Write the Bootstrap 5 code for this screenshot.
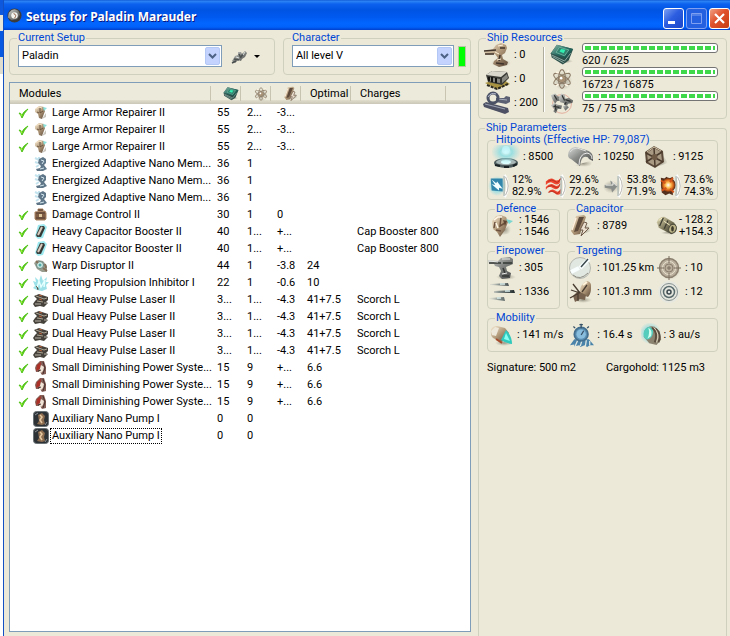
<!DOCTYPE html>
<html lang="en">
<head>
<meta charset="utf-8">
<meta name="viewport" content="width=device-width, initial-scale=1">
<title>Setups for Paladin Marauder</title>
<link rel="stylesheet" href="https://cdn.jsdelivr.net/npm/bootstrap@5.3.0/dist/css/bootstrap.min.css">
<style>
:root{--face:#ece9d8;--line:#d0d0bf;--field:#7f9db9;--caption:#0046d5}
body{font-family:Roboto,"Liberation Sans",sans-serif;font-size:11px;line-height:12px;color:#000;background:#fff}
.desktop-edge{flex:0 0 3px;background:linear-gradient(#0d58dc 0 15px,#e7e5da 15px 31px,#0759e2 31px 57px,#dedcce 57px 74px,#fff 74px)}
.win{border-left:1px solid #1250c4;background:var(--face);min-width:0}
.titlebar{height:30px;background:linear-gradient(#0a4fd0 0,#2f86f5 1px,#0c62ee 4px,#0054e3 10px,#0059f0 17px,#0266ff 23px,#0162fb 27px,#003fcb 30px);padding:4px 0 0 3px}
.titlebar h1{font:bold 12px/18px "Noto Sans","Open Sans",sans-serif;color:#fff;text-shadow:1px 1px #0a1883}
.winbtns{gap:2px}
.winbtn{width:21px;height:21px;border:1px solid #fff;border-radius:3px;background:linear-gradient(135deg,#7da2f2,#2c5de0 45%,#1c48c8);color:#fff}
.winbtn-max{border-color:#7f9ff0;background:#2560e0}
.winbtn-close{background:linear-gradient(135deg,#f0a085,#e0512b 45%,#c63c12)}
fieldset.box{border:1px solid var(--line);border-radius:4px;min-width:0}
.box>legend{float:none;width:auto;margin:0 0 0 7px;padding:0 1px;font-size:11px;line-height:10px;color:var(--caption)}
.pane-left{min-width:0;padding:3px 7px 4px 5px}
.pane-right{flex:0 0 252px;padding-top:3px;padding-right:3px}
.chooser{padding:0 4px 7px 8px}
.chooser>legend{margin-left:-1px}
.chooser>div{padding-top:2px}
.chooser-pilot{flex:0 1 188px}
.pick{height:22px;border:1px solid var(--field);border-radius:0;padding:0 20px 0 3px;font-size:11px;line-height:20px;color:#000;background:#fff url("data:image/svg+xml,%3Csvg xmlns='http://www.w3.org/2000/svg' width='15' height='18'%3E%3Crect x='.5' y='.5' width='14' height='17' rx='1.5' fill='%23c3d3fd' stroke='%23b4c8f6'/%3E%3Cpath d='M4 7l3.500 3.500L11 7' fill='none' stroke='%234d6185' stroke-width='2'/%3E%3C/svg%3E") no-repeat right 1px center/15px 18px}
.pick-setup{flex:0 1 204px}
.drop-arrow{border:3px solid transparent;border-top-color:#000;border-bottom:0}
.skill-light{width:8px;height:21px;background:#0f0;border:1px solid #b9c7a4}
.list-frame{border:1px solid var(--field);background:#fff;margin-top:7px}
.modules{table-layout:fixed;width:100%;border-collapse:separate;border-spacing:0}
.modules th{height:21px;padding:0 0 0 9px;font-weight:400;background:linear-gradient(#ebeadb 0 17px,#e2decd 17px,#cbc7b8 21px)}
.modules th>span{display:flex;align-items:center;height:15px;border-right:1px solid #c7c5b2;box-shadow:1px 0 #fff}
.modules th.ic>span{justify-content:flex-end;padding-right:1px}
.modules th:last-child>span{border:0;box-shadow:none}
.modules td{height:17px;padding:1px 0 0 6px;white-space:nowrap}
.modules td:first-child{padding-left:8px}
.modules col.c-name{width:201px}.modules col.c-num{width:30px}.modules col.c-opt{width:50px}.modules col.c-chg{width:95px}
.slot{display:flex;align-items:center;height:16px}
.slot .tick{width:11px;height:12px;margin-right:4px;flex:none}
.slot .mod{width:16px;height:16px;margin-right:1px;flex:none}
.slot .label{padding:1px;border:1px dotted transparent;line-height:12px}
.slot .label.on{border-color:#000}
.ico{width:28px;height:24px;flex:none;overflow:visible}
.ico-sm{width:22px}
.split{border-left:1px solid #aeac9d;box-shadow:1px 0 #fff;margin:4px 4px 6px 0}
.meter{height:10px;border:1px solid #747474;border-radius:3px;background:#fff;padding:2px;--bs-progress-bar-bg:transparent}
.meter .progress-bar{background:repeating-linear-gradient(90deg,#3ed84a 0 6px,#fff 6px 8px)}
.meter+div{padding-top:2px;line-height:12px}
.res-left{flex:0 0 60px}
.res-right{padding-bottom:3px}
.res-right .stat{gap:6px}
fieldset.params{padding:2px 8px 0;flex:1 1 auto;border-bottom:0;border-radius:4px 4px 0 0}
.params>legend{margin-left:-2px}
.g3{display:grid;grid-template-columns:repeat(3,1fr)}
.g4{display:grid;grid-template-columns:repeat(4,1fr)}
.pair{display:grid;grid-template-columns:73px 1fr;gap:3px 7px;margin:4px 0}
.stat{display:flex;align-items:center;gap:3px;white-space:nowrap;height:24px}
.stat.tight{gap:1px}
.resist{display:flex;align-items:center;gap:2px;height:26px}
.resist .ico{width:22px}
.split-2{display:grid;grid-template-columns:88px 1fr}
.split-2 .ico{width:26px}
.split-2 .ico-sm{width:22px}
.footline{display:grid;grid-template-columns:119px 1fr;padding-top:10px}
</style>
</head>
<body>
<svg width="0" height="0" class="position-absolute" aria-hidden="true">
<defs>
<linearGradient id="steel" x1="0" y1="0" x2="1" y2="1"><stop stop-color="#dcdedc"/><stop offset=".45" stop-color="#888b87"/><stop offset="1" stop-color="#3f4242"/></linearGradient>
<linearGradient id="tan" x1="0" y1="0" x2="1" y2="1"><stop stop-color="#f8ead2"/><stop offset=".5" stop-color="#b09879"/><stop offset="1" stop-color="#5a4636"/></linearGradient>
<linearGradient id="teal" x1="0" y1="0" x2="1" y2="1"><stop stop-color="#8ebdad"/><stop offset=".5" stop-color="#286b62"/><stop offset="1" stop-color="#13463f"/></linearGradient>
<linearGradient id="olive" x1="0" y1="0" x2="1" y2="1"><stop stop-color="#e6dfb7"/><stop offset=".5" stop-color="#7c775b"/><stop offset="1" stop-color="#22231b"/></linearGradient>
<linearGradient id="trail" gradientUnits="userSpaceOnUse" x1="0" y1="0" x2="27" y2="0"><stop stop-color="#b9c0bd" stop-opacity="0"/><stop offset=".4" stop-color="#899391"/><stop offset="1" stop-color="#20292a"/></linearGradient>
<radialGradient id="glow"><stop stop-color="#e8ffff"/><stop offset=".4" stop-color="#86dce3"/><stop offset="1" stop-color="#94d9df" stop-opacity="0"/></radialGradient>
<radialGradient id="fire"><stop stop-color="#fff"/><stop offset=".35" stop-color="#ffc35b"/><stop offset=".7" stop-color="#d86418"/><stop offset="1" stop-color="#452316"/></radialGradient>
<radialGradient id="shade"><stop stop-color="#5c594c" stop-opacity=".6"/><stop offset="1" stop-color="#8c8876" stop-opacity="0"/></radialGradient>
</defs>
<symbol id="i-turret" viewBox="0 0 28 24"><ellipse cx="18" cy="20" rx="10" ry="4" fill="url(#shade)"/><path d="M1 9l9-3 3-4 5-2 5 2 1 3-2 5-3 2 1 4 5 3-1 3-8 2-6-3 1-3 4-3-3-4-9 1z" fill="url(#tan)"/><path d="M1 8l12-1M2 11h9M17 5l5 0M13 20l8 1M17 12l-1 6" stroke="#3f332a" stroke-width="1.500" fill="none"/><path d="M15 3l5-1M12 9l4 2M14 17l4-1" stroke="#fff1d8"/></symbol>
<symbol id="i-launcher" viewBox="0 0 28 24"><path d="M2 16l12 6 13-5-9-6z" fill="#a89342"/><path d="M4 18l10 4 11-5" stroke="#29271e" stroke-width="2" stroke-dasharray="3 1" fill="none"/><path d="M3 8l6-4 15 1 2 6-7 7-14-3z" fill="#393935"/><path d="M3 8l6-4 15 1-6 5z" fill="#dad8cc"/><path d="M5 10l12 2v4L5 14zM19 11l5-4 1 4-6 5z" fill="#898880"/><path d="M6 10v4M9 10v5M13 11v5" stroke="#161715" stroke-width="2"/></symbol>
<symbol id="i-calib" viewBox="0 0 28 24"><path d="M3 17l20 5-3-7z" fill="url(#shade)"/><path d="M13 7l8 0 2-2 4 1v5l-4 2-10-2z" fill="#5b6072"/><path d="M15 8l9 1" stroke="#a7acbd"/><path d="M0 13l3-2 22 6 1 4-4 2L1 16z" fill="#4d5163"/><path d="M2 13l20 5" stroke="#9ea3b4"/><circle cx="10" cy="7" r="5" fill="none" stroke="#4c5265" stroke-width="3"/><path d="M5 6q3-5 8-3" stroke="#b8bdd0" fill="none"/></symbol>
<symbol id="i-cpu" viewBox="0 0 28 28"><path d="M8 25l19-3-2-4z" fill="url(#shade)"/><path d="M1 12L8 2l19 5-5 13-7 5-13-8z" fill="#2c4f49"/><path d="M1 12L8 2l19 5-8 11z" fill="url(#teal)"/><path d="M7 11l4-6 11 3-5 7z" fill="#32806d" stroke="#73b8a2"/><path d="M11 10l2-3 5 1-2 4z" fill="#31efb0"/><path d="M2 14l15 7 7-9M3 16l13 7" stroke="#9ab5ae" fill="none"/></symbol>
<symbol id="i-grid" viewBox="0 0 28 28"><circle cx="15" cy="16" r="11" fill="url(#shade)"/><g fill="none" stroke="#8c7b66" stroke-width="1.300"><ellipse cx="14" cy="14" rx="4" ry="11"/><ellipse cx="14" cy="14" rx="4" ry="11" transform="rotate(60 14 14)"/><ellipse cx="14" cy="14" rx="4" ry="11" transform="rotate(120 14 14)"/></g><circle cx="14" cy="14" r="3.500" fill="#a68f72"/><path d="M7 6l3 1M20 6l2-2M7 22l3-2M17 20l4 2" stroke="#fff5e4" stroke-width="2"/><circle cx="13" cy="13" r="1.500" fill="#fff"/></symbol>
<symbol id="i-drone" viewBox="0 0 28 28"><circle cx="14" cy="15" r="11" fill="none" stroke="#e2a594"/><g fill="url(#steel)"><path d="M1 5l5-2 3 3 4 1-1 4-4 1-2 3-3-5z"/><path d="M10 9l3-6 4 1 1 5 4-1 5 3-1 3-5 1-2 4-3-5-4-1z"/><path d="M1 17l4-3 4 2 5 1-1 4-4 0-2 5-3-2 1-3z"/><path d="M15 18l4-2 3 3-4 4z"/></g><path d="M5 5l3 5M14 5l3 6M4 18l7 1M6 16l1 7M18 10l6 2M19 13l-2 3" stroke="#303231" stroke-width="1.500"/></symbol>
<symbol id="i-shield" viewBox="0 0 28 24"><ellipse cx="14" cy="18" rx="12" ry="5" fill="#4e5b5d"/><ellipse cx="14" cy="17" rx="10" ry="3" fill="#a9b7b6"/><ellipse cx="14" cy="17" rx="5" ry="2" fill="#dcffff"/><ellipse cx="14" cy="7" rx="15" ry="11" fill="url(#glow)" opacity=".8"/><circle cx="14" cy="5" r="4" fill="#c7faff" opacity=".7"/><path d="M3 20l5 1M12 22h5M21 21l4-2" stroke="#1b2223" stroke-width="2"/></symbol>
<symbol id="i-armor" viewBox="0 0 28 24"><path d="M6 21l17 1 3-7z" fill="url(#shade)"/><path d="M1 10q1-8 8-8l10 3q7 2 7 8v3l-4-2q-1-3-5-2-3 1-4 9L4 14q-3-1-3-4z" fill="url(#steel)"/><path d="M12 20q0-11 8-12 5 1 5 6" stroke="#eee" fill="none"/><path d="M3 7q3-4 7-4l9 3" stroke="#dfe0de" fill="none"/></symbol>
<symbol id="i-hull" viewBox="0 0 28 24"><path d="M12 23l14-5-5-8z" fill="url(#shade)"/><path d="M12 1l9 5 1 11-9 6-9-5-1-11z" fill="#5a4938"/><path d="M12 3l7 4 1 9-7 5-7-4-1-9z" fill="#a99a84"/><path d="M12 2l1 20M4 8l17 9M20 7L4 17" stroke="#4a3a2c" stroke-width="1.500"/><circle cx="12.500" cy="12" r="3" fill="#6d5944"/><path d="M5 7l7-5 7 4" stroke="#d6c5aa" fill="none"/></symbol>
<symbol id="i-arc" viewBox="0 0 22 26"><path d="M17 1q7 12 0 24" fill="none" stroke="#fff" stroke-width="3"/><path d="M18 3q6 10 0 20" fill="none" stroke="#b1afa5"/><path d="M16.500 2v22" stroke="#8fa0a2"/></symbol>
<symbol id="i-em" viewBox="0 0 22 26"><ellipse cx="9" cy="13" rx="10" ry="11" fill="url(#glow)"/><path d="M2 5l13 0 0 14-12-1z" fill="#3386ab"/><path d="M3 6l5 4 1-2 6 8-4-1 0 3-8-7 4 1z" fill="#f4ffff"/><use href="#i-arc"/></symbol>
<symbol id="i-therm" viewBox="0 0 22 26"><path d="M0 8q5-5 9-2t7-2l-1 6q-3 3-7 0t-8 2M0 14q5-5 9-2t7-2l-2 5q-3 3-7 0t-7 2M2 20q4-5 8-2t6-2v5q-3 3-6 0t-8-1" fill="#ef4630"/><path d="M2 8q5-3 8 0t6-3M2 14q4-3 8 0t5-3M3 20q4-3 7 0t5-2" stroke="#b5301f" fill="none"/><use href="#i-arc"/></symbol>
<symbol id="i-kin" viewBox="0 0 22 26"><ellipse cx="9" cy="14" rx="9" ry="7" fill="url(#shade)"/><path d="M2 12l7-1-1-4 8 6-6 7-1-4-7-1z" fill="#8a8e8a"/><path d="M3 12l8 0v-3l4 4" stroke="#f7f7f1" fill="none"/><use href="#i-arc"/></symbol>
<symbol id="i-exp" viewBox="0 0 22 26"><path d="M0 4l4 1 2-2 3 2 4-2v20l-4-2-4 2-4-3z" fill="#553120"/><circle cx="8" cy="12" r="8" fill="url(#fire)"/><path d="M0 7l5 3M1 18l5-3M13 4l-3 5M14 20l-4-4" stroke="#d4541b" stroke-width="2"/><use href="#i-arc"/></symbol>
<symbol id="i-repair" viewBox="0 0 24 24"><path d="M8 22l13-3V9z" fill="url(#shade)"/><path d="M2 7l4-5 5-1 5 2 2 5-3 8-5 7-3-5-4-3z" fill="url(#tan)"/><path d="M16 5l7 2-4 3" fill="#79d6d0"/><path d="M11 3l-1 9 5-3M5 8l-1 6M6 16l5 1" stroke="#6b513d" stroke-width="1.500" fill="none"/><path d="M4 6l4-3 4 0M6 9l2 5" stroke="#fff8e9" stroke-width="1.500" fill="none"/><path d="M13 6l4 1-2 5z" fill="#604734"/></symbol>
<symbol id="i-cap" viewBox="0 0 24 24"><path d="M9 22l13-5-3-7z" fill="url(#shade)"/><path d="M7 2l8-1 2 2-6 17-6 1-3-4z" fill="url(#tan)"/><path d="M10 3l5 0-6 14-4 1z" fill="#5e4a3b"/><path d="M15 8l3 1-2 5 4 0-8 8 2-6-3 0z" fill="#ebdfcf" stroke="#6f5a49"/><path d="M7 4l-4 12" stroke="#fff1df" stroke-width="1.500"/></symbol>
<symbol id="i-boost" viewBox="0 0 24 24"><path d="M4 20l17 2 2-7z" fill="url(#shade)"/><path d="M1 8q2-6 8-6l10 6q5 4 3 9l-5 4L3 14z" fill="url(#olive)"/><ellipse cx="18" cy="15" rx="4" ry="5" fill="#bcb488" stroke="#47463a" transform="rotate(20 18 15)"/><ellipse cx="18" cy="15" rx="1.500" ry="3" fill="#3b392b"/><path d="M8 3l-4 9M13 6l-4 9" stroke="#403f34" stroke-width="1.500"/><path d="M3 6l4-3M9 7l6 4" stroke="#fff5cb"/></symbol>
<symbol id="i-gun" viewBox="0 0 28 24"><ellipse cx="18" cy="21" rx="10" ry="3" fill="url(#shade)"/><path d="M0 4l10 1 3-3 9-1 3 2 0 5-7 3 1 4 4 2-1 5-8 1-3-3 2-5-2-4-4-1-1-2L1 8z" fill="url(#steel)"/><path d="M1 7h12M15 7l9 0M14 20l7 0M15 12l2 5" stroke="#353836" stroke-width="1.500"/><path d="M1 5l9 1M14 3l8 0M14 18l5-1" stroke="#e7e9e7"/></symbol>
<symbol id="i-missile" viewBox="0 0 28 24"><path d="M2 4l18-1 1 3-19-1zM6 11l20-1 1 3-21 0zM1 18l15-1 1 4-16-2z" fill="url(#trail)"/><path d="M12 4h5M17 11h5M9 18h4" stroke="#d7ebea" stroke-width="1.500"/></symbol>
<symbol id="i-range" viewBox="0 0 24 24"><circle cx="11" cy="12" r="10.500" fill="#e1e8e2" stroke="#b5b7ae"/><path d="M11 12L20 3M2 16l8-4" stroke="#f9ffff" stroke-width="4"/><path d="M12 11l7-8" stroke="#3b494d" stroke-width="1.500"/><path d="M4 19q7 6 15-2" stroke="#918f84" fill="none"/></symbol>
<symbol id="i-scan" viewBox="0 0 24 24"><ellipse cx="14" cy="20" rx="9" ry="3" fill="url(#shade)"/><path d="M11 14Q10 4 18 1q5 1 4 7 0 6-3 9z" fill="url(#tan)"/><path d="M9 11l8 4-1 5-5-1-5 3-2-6z" fill="#76624e"/><path d="M4 4l7 9M2 10l9 3M1 18l9-5M13 12l5-7M9 13v8" stroke="#493c31" stroke-width="1.300"/><path d="M14 5l4-3" stroke="#fff3db" stroke-width="2"/></symbol>
<symbol id="i-target" viewBox="0 0 24 24"><circle cx="13" cy="13" r="11" fill="url(#shade)"/><circle cx="12" cy="12" r="9.500" fill="#b9ae9c" stroke="#8c8070" stroke-width="1.500"/><circle cx="12" cy="12" r="6.500" fill="none" stroke="#eee5d3"/><circle cx="12" cy="12" r="4" fill="none" stroke="#8a7e6e"/><path d="M12 0v7M12 17v7M0 12h7M17 12h7M10 12h4M12 10v4" stroke="#7a6f60"/></symbol>
<symbol id="i-lock" viewBox="0 0 24 24"><circle cx="12" cy="12" r="11" fill="#e6e8df"/><circle cx="12" cy="12" r="8.500" fill="none" stroke="#858f90"/><circle cx="12" cy="12" r="5.500" fill="none" stroke="#596a6d" stroke-width="1.500"/><circle cx="12" cy="12" r="2" fill="#dfe5e2" stroke="#3b484d" stroke-width="1.500"/></symbol>
<symbol id="i-speed" viewBox="0 0 24 24"><ellipse cx="14" cy="20" rx="9" ry="3" fill="url(#shade)"/><path d="M1 7q1-4 6-4l8 2 4 5-7 9-9-4q-3-3-2-8z" fill="url(#tan)"/><path d="M1 8l4-4 4 1-3 8-4-1z" fill="#eee8da"/><path d="M6 16l6 4" stroke="#a54b2b" stroke-width="2"/><path d="M16 7q6 6 6 14-7-1-11-4z" fill="#30c9bd"/><path d="M16 10l4 8-6-2z" fill="#88fff0"/></symbol>
<symbol id="i-agility" viewBox="0 0 28 28"><path d="M5 19l-5 7 5-1 0 2 6-1 1 2 5-2 3 2 3-2 5 0-6-7z" fill="#4a83aa"/><path d="M6 27l3-7M12 27l2-7M18 27l1-7M23 26l0-5" stroke="#dfe8e2" stroke-width="1.500"/><circle cx="13" cy="13" r="8" fill="#5a8fb3" stroke="#446e8d" stroke-width="2"/><circle cx="13" cy="13" r="5.500" fill="#88bddd"/><path d="M13 14l3-5M13 6V1M11 2h4M6 6L4 4M20 6l2-2" stroke="#365066" stroke-width="1.500"/></symbol>
<symbol id="i-warp" viewBox="0 0 24 24"><circle cx="10" cy="10" r="12" fill="url(#glow)"/><path d="M4 7q4-6 11-4l5 5 2 9-5 6-8-2-6-7z" fill="#8b8370"/><ellipse cx="8" cy="10" rx="5" ry="7" fill="#54cdbd" transform="rotate(20 8 10)"/><path d="M8 4q5 3 3 9l-4 3q3-6 1-12z" fill="#d1fff0"/><path d="M12 4q7 5 3 16M16 5q7 6 3 15" stroke="#5a4d3f" stroke-width="2" fill="none"/><path d="M14 4q7 6 3 16" stroke="#e8dcc5" fill="none"/></symbol>
<symbol id="m-tick" viewBox="0 0 11 12"><path d="M1 6q2 0 3 2 2-4 6-6-4 4-6 9-1-3-3-5z" fill="#58c812" stroke="#52c41a"/><path d="M3 7l1 2" stroke="#adff45"/></symbol>
<symbol id="m-rep" viewBox="0 0 16 16"><path d="M2 4l4-3 5 1 1 4-3 8-3-1-1-4-3-2z" fill="url(#tan)"/><path d="M10 2l4 1-3 3" fill="#8ae1dc"/><path d="M7 3v5l3-2M4 7l2 1" stroke="#6b5440" fill="none"/><path d="M3 4l3-2 3 1" stroke="#f5e2c4" fill="none"/><path d="M9 14l4-6v4z" fill="#c9c5bd"/></symbol>
<symbol id="m-nano" viewBox="0 0 16 16"><path d="M2 2l4 2M2 6l3 1M3 11l3-2M6 1v3" stroke="#c3e3ee" stroke-width="2" fill="none"/><path d="M6 3l4-2 3 2 0 4-2 2 3 4-4 2-6 0-1-2 4-1 1-2-3-3z" fill="#5f7688"/><path d="M8 4l3 1-2 3M7 13l4-1" stroke="#d4e7ee" fill="none"/></symbol>
<symbol id="m-dmg" viewBox="0 0 16 16"><path d="M5 4V2h5v2M2 5l10-1 1 2v6l-1 1-9 0-1-1z" fill="#7f5d45" stroke="#a98261"/><path d="M3 6h9M3 11h9" stroke="#574032"/><path d="M6 7h3v3H6z" fill="#e0c99f"/><path d="M5 3h5" stroke="#604734"/></symbol>
<symbol id="m-boost" viewBox="0 0 16 16"><path d="M5 1l6-1 3 3-4 11-5 1-3-3z" fill="#9eeaf0"/><path d="M7 2l4 0 1 2-4 9-4 0-1-2z" fill="#3e4542"/><path d="M9 3l-4 8" stroke="#d9ccbe" stroke-width="2"/><path d="M11 4l-4 8" stroke="#2e302d"/></symbol>
<symbol id="m-warp" viewBox="0 0 16 16"><path d="M1 5l4-3 5 1 4 5 0 6-5 0-5-3z" fill="#989d90"/><circle cx="7" cy="7" r="3.500" fill="#cceae4" stroke="#6a8580"/><path d="M10 10l4 3M3 3l2 2M12 6l1 4" stroke="#85705b" stroke-width="2"/><circle cx="7" cy="7" r="1.500" fill="#53a9a7"/></symbol>
<symbol id="m-prop" viewBox="0 0 16 16"><path d="M0 6l3 1-1-5 4 4 2-6 2 6 4-4-1 5 3 0-3 3 1 4-5 2-5-1-4-2 2-2z" fill="#9ce1e8"/><path d="M4 13l2-7 2 6 4-7-1 7" stroke="#e6ffff" stroke-width="1.500" fill="none"/><path d="M3 11l2 2v2" stroke="#726b5c"/></symbol>
<symbol id="m-laser" viewBox="0 0 16 16"><path d="M0 12l2-3 2-2-3-3 5-2 9 3 0 3-2 2 2 1-4 4-4-1-5 1z" fill="#46423b"/><path d="M3 4l8 3 3-1M4 9l6 1" stroke="#afa594" fill="none"/><path d="M6 3l3 1M6 7l3 1" stroke="#b9603b"/><path d="M2 12l6 0M11 11l3 0" stroke="#918d84" stroke-width="1.500"/></symbol>
<symbol id="m-power" viewBox="0 0 16 16"><path d="M3 5l4-4 4 0 2 6 0 7-4 1-2-3-4 0-1-4z" fill="#866057"/><path d="M4 5l4-3-1 7-4 2z" fill="#ab3028"/><path d="M8 5l3 2-1 4-2 2-2-1z" fill="#efe3d6"/><path d="M10 2l2 6-2 6M5 11l3-1" stroke="#493330" fill="none"/></symbol>
<symbol id="m-pump" viewBox="0 0 16 16"><rect x=".5" y=".5" width="15" height="15" rx="3" fill="#2d3236" stroke="#6b7276"/><path d="M2 4l3-2M12 14l2-3" stroke="#8b9194"/><path d="M5 4l4-2 3 3-1 4 1 4-3 1-5-1 2-3z" fill="#8c6d50"/><path d="M7 4l2 2-2 3 2 3" stroke="#e5c9a3" stroke-width="1.500" fill="none"/></symbol>
</svg>

<div class="d-flex min-vh-100">
  <div class="desktop-edge"></div>
  <div class="win d-flex flex-column flex-grow-1">
    <header class="titlebar d-flex align-items-start">
      <svg class="mt-1 me-1" width="15" height="15" viewBox="0 0 16 16" aria-hidden="true"><circle cx="8" cy="8" r="7.500" fill="#3d3c3c"/><path d="M2 5q5-6 10-2l2 4-3 5-6 1-4-3z" fill="url(#steel)"/><circle cx="8" cy="8" r="3.500" fill="#f2f2ef"/><path d="M7 6q4 1 1 5" stroke="#86583a" fill="none"/></svg>
      <h1 class="m-0 flex-grow-1 pt-1">Setups for Paladin Marauder</h1>
      <div class="winbtns d-flex">
        <button type="button" class="winbtn p-0 d-flex mt-1" aria-label="Minimize"><svg width="19" height="19"><path d="M4 13.500h7" stroke="#fff" stroke-width="3"/></svg></button>
        <button type="button" class="winbtn winbtn-max p-0 d-flex mt-1" aria-label="Maximize"><svg width="19" height="19"><path d="M4.500 4.500h10v10h-10zM4 6h11" fill="none" stroke="#7f9ff0"/></svg></button>
        <button type="button" class="winbtn winbtn-close p-0 d-flex mt-1" aria-label="Close"><svg width="19" height="19"><path d="M5 5l9 9M14 5l-9 9" stroke="#fff" stroke-width="2.200"/></svg></button>
      </div>
    </header>

    <div class="d-flex flex-grow-1">
      <main class="pane-left d-flex flex-column flex-grow-1">
        <div class="d-flex gap-2">
          <fieldset class="box chooser flex-grow-1">
            <legend><label for="setup">Current Setup</label></legend>
            <div class="d-flex align-items-center">
              <select id="setup" class="pick pick-setup form-select"><option>Paladin</option></select>
              <button type="button" class="btn p-0 border-0 d-flex align-items-center ms-2 gap-1" aria-label="Ship actions"><svg width="20" height="17" viewBox="0 0 20 17"><path d="M2 13l3-5 3-1 0-3 3 0 1 2 3-3 2 2-2 4-3 2-1 2-3-1-3 3z" fill="url(#steel)"/><path d="M4 11l5 1M9 6l2 4M13 6l-2 3M2 15l4-2" stroke="#4a4f4f" stroke-width="1.500"/><path d="M6 9l3 1M15 4l-2 3" stroke="#dbe2df"/></svg><span class="drop-arrow"></span></button>
            </div>
          </fieldset>
          <fieldset class="box chooser chooser-pilot">
            <legend><label for="pilot">Character</label></legend>
            <div class="d-flex align-items-center gap-1">
              <select id="pilot" class="pick form-select"><option>All level V</option></select>
              <span class="skill-light flex-shrink-0"></span>
            </div>
          </fieldset>
        </div>

        <div class="list-frame flex-grow-1">
          <table class="modules">
            <colgroup><col class="c-name"><col class="c-num"><col class="c-num"><col class="c-num"><col class="c-opt"><col class="c-chg"><col></colgroup>
            <thead><tr>
              <th scope="col"><span>Modules</span></th>
              <th scope="col" class="ic" aria-label="CPU"><span><svg width="16" height="16"><use href="#i-cpu"/></svg></span></th>
              <th scope="col" class="ic" aria-label="Powergrid"><span><svg width="16" height="16"><use href="#i-grid"/></svg></span></th>
              <th scope="col" class="ic" aria-label="Capacitor"><span><svg width="16" height="16"><use href="#i-cap"/></svg></span></th>
              <th scope="col"><span>Optimal</span></th>
              <th scope="col"><span>Charges</span></th>
              <th><span></span></th>
            </tr></thead>
            <tbody id="rows"></tbody>
          </table>
        </div>
      </main>

      <aside class="pane-right d-flex flex-column">
        <fieldset class="box">
          <legend>Ship Resources</legend>
          <div class="d-flex ps-1 pe-2">
            <div class="res-left">
              <div class="stat"><svg class="ico"><use href="#i-turret"/></svg>: 0</div>
              <div class="stat"><svg class="ico"><use href="#i-launcher"/></svg>: 0</div>
              <div class="stat"><svg class="ico"><use href="#i-calib"/></svg>: 200</div>
            </div>
            <div class="split"></div>
            <div class="res-right flex-grow-1">
              <div class="stat"><svg class="ico"><use href="#i-cpu"/></svg><div class="flex-grow-1"><div class="progress meter"><div class="progress-bar w-100"></div></div><div>620 / 625</div></div></div>
              <div class="stat"><svg class="ico"><use href="#i-grid"/></svg><div class="flex-grow-1"><div class="progress meter"><div class="progress-bar w-100"></div></div><div>16723 / 16875</div></div></div>
              <div class="stat"><svg class="ico"><use href="#i-drone"/></svg><div class="flex-grow-1"><div class="progress meter"><div class="progress-bar w-100"></div></div><div>75 / 75 m3</div></div></div>
            </div>
          </div>
        </fieldset>

        <fieldset class="box params mt-1">
          <legend>Ship Parameters</legend>
          <fieldset class="box">
            <legend>Hitpoints (Effective HP: 79,087)</legend>
            <div class="g3 ps-1">
              <div class="stat"><svg class="ico"><use href="#i-shield"/></svg>: 8500</div>
              <div class="stat"><svg class="ico"><use href="#i-armor"/></svg>: 10250</div>
              <div class="stat"><svg class="ico"><use href="#i-hull"/></svg>: 9125</div>
            </div>
            <div class="g4 pt-1">
              <div class="resist"><svg class="ico"><use href="#i-em"/></svg><span>12%<br>82.9%</span></div>
              <div class="resist"><svg class="ico"><use href="#i-therm"/></svg><span>29.6%<br>72.2%</span></div>
              <div class="resist"><svg class="ico"><use href="#i-kin"/></svg><span>53.8%<br>71.9%</span></div>
              <div class="resist"><svg class="ico"><use href="#i-exp"/></svg><span>73.6%<br>74.3%</span></div>
            </div>
          </fieldset>
          <div class="pair">
            <fieldset class="box pb-1">
              <legend>Defence</legend>
              <div class="stat"><svg class="ico"><use href="#i-repair"/></svg><span>: 1546<br>: 1546</span></div>
            </fieldset>
            <fieldset class="box pb-1">
              <legend>Capacitor</legend>
              <div class="split-2">
                <div class="stat"><svg class="ico"><use href="#i-cap"/></svg>: 8789</div>
                <div class="stat tight"><svg class="ico ico-sm"><use href="#i-boost"/></svg><span>- 128.2<br>+154.3</span></div>
              </div>
            </fieldset>
            <fieldset class="box pb-1">
              <legend>Firepower</legend>
              <div class="stat"><svg class="ico"><use href="#i-gun"/></svg>: 305</div>
              <div class="stat"><svg class="ico"><use href="#i-missile"/></svg>: 1336</div>
            </fieldset>
            <fieldset class="box pb-1">
              <legend>Targeting</legend>
              <div class="split-2">
                <div class="stat"><svg class="ico"><use href="#i-range"/></svg>: 101.25 km</div>
                <div class="stat"><svg class="ico"><use href="#i-target"/></svg>: 10</div>
                <div class="stat"><svg class="ico"><use href="#i-scan"/></svg>: 101.3 mm</div>
                <div class="stat"><svg class="ico"><use href="#i-lock"/></svg>: 12</div>
              </div>
            </fieldset>
          </div>
          <fieldset class="box pb-1">
            <legend>Mobility</legend>
            <div class="g3">
              <div class="stat tight"><svg class="ico"><use href="#i-speed"/></svg>: 141 m/s</div>
              <div class="stat tight ps-1"><svg class="ico"><use href="#i-agility"/></svg>: 16.4 s</div>
              <div class="stat tight"><svg class="ico ico-sm"><use href="#i-warp"/></svg>: 3 au/s</div>
            </div>
          </fieldset>
          <div class="footline"><span>Signature: 500 m2</span><span>Cargohold: 1125 m3</span></div>
        </fieldset>
      </aside>
    </div>
  </div>
</div>

<script src="https://cdn.jsdelivr.net/npm/bootstrap@5.3.0/dist/js/bootstrap.bundle.min.js"></script>
<script>
// repeat count, icon, active, name, cpu, grid, cap, optimal, charge
const fitted = [
  [3,'rep',1,'Large Armor Repairer II','55','2...','-3...','',''],
  [3,'nano',0,'Energized Adaptive Nano Mem...','36','1','','',''],
  [1,'dmg',1,'Damage Control II','30','1','0','',''],
  [2,'boost',1,'Heavy Capacitor Booster II','40','1...','+...','','Cap Booster 800'],
  [1,'warp',1,'Warp Disruptor II','44','1','-3.8','24',''],
  [1,'prop',1,'Fleeting Propulsion Inhibitor I','22','1','-0.6','10',''],
  [4,'laser',1,'Dual Heavy Pulse Laser II','3...','1...','-4.3','41+7.5','Scorch L'],
  [3,'power',1,'Small Diminishing Power Syste...','15','9','+...','6.6',''],
  [2,'pump',0,'Auxiliary Nano Pump I','0','0','','','']
];
const rows = fitted.flatMap(([n, ...m]) => Array(n).fill(m));
document.getElementById('rows').innerHTML = rows.map(([icon, active, name, ...cells], i) =>
  `<tr><td><div class="slot"><svg class="tick">${active ? '<use href="#m-tick"/>' : ''}</svg><svg class="mod"><use href="#m-${icon}"/></svg><span class="label${i === rows.length - 1 ? ' on' : ''}">${name}</span></div></td>${cells.map(c => `<td>${c}</td>`).join('')}<td></td></tr>`
).join('');
</script>
</body>
</html>
